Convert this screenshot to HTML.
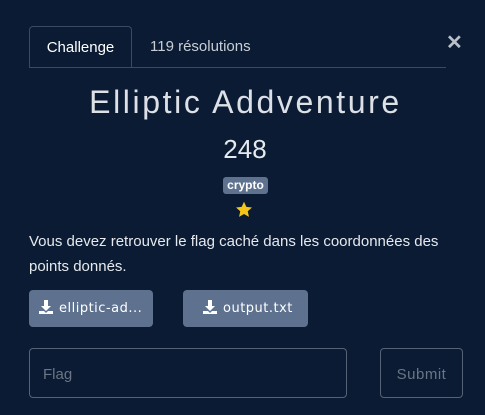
<!DOCTYPE html>
<html><head><meta charset="utf-8"><style>
body{margin:0;width:485px;height:415px;background:#0a1b33;font-family:"Liberation Sans",sans-serif;color:#e6e9ee;position:relative;overflow:hidden}
.a{position:absolute}
.tab{left:29px;top:26px;width:103px;height:41px;border:1px solid #3a4a60;border-bottom:none;border-radius:4px 4px 0 0;box-sizing:border-box;font-size:15px;text-align:center;line-height:42px;color:#fff}
.line{left:29px;top:67px;width:417px;height:1px;background:#3a4a60}
.btn{height:37px;top:290px;background:#5e7290;border-radius:4px;color:#fff;font-size:13px;line-height:37px;letter-spacing:.5px;font-family:"DejaVu Sans",sans-serif}
.btn svg{vertical-align:-3px;margin-right:5px}
</style></head><body>
<div class="a tab">Challenge</div>
<div class="a" style="left:150px;top:38px;font-size:15px;color:#c9ced6">119 résolutions</div>
<div class="a line"></div>
<div class="a" style="left:446px;top:30px;font-size:20px;font-weight:bold;color:#b8bfc9">✕</div>
<div class="a" style="left:0;width:491px;top:84px;text-align:center;font-size:32px;letter-spacing:2.6px;color:#dde1e7">Elliptic Addventure</div>
<div class="a" style="left:0;width:490px;top:134px;text-align:center;font-size:26px">248</div>
<div class="a" style="left:223px;top:177px;width:45px;height:17px;background:#5e7290;border-radius:3px;font-size:12px;font-weight:bold;text-align:center;line-height:17px;color:#fff">crypto</div>
<svg class="a" style="left:235px;top:201px" width="18" height="17" viewBox="0 0 24 23"><path d="M12 1l3.2 7 7.6.8-5.7 5.1 1.6 7.5L12 17.6 5.3 21.4l1.6-7.5L1.2 8.8l7.6-.8z" fill="#f5c518"/></svg>
<div class="a" style="left:29px;top:229px;width:440px;font-size:15px;line-height:25px;color:#e6e9ee">Vous devez retrouver le flag caché dans les coordonnées des points donnés.</div>
<div class="a btn" style="left:29px;width:124px;padding-left:9px;box-sizing:border-box"><svg width="16" height="16" viewBox="0 0 16 16"><path d="M6 1h4v6h3l-5 5-5-5h3z" fill="#fff"/><path d="M1 12h5l2 2 2-2h5v3H1z" fill="#fff"/></svg>elliptic-ad...</div>
<div class="a btn" style="left:183px;width:125px;padding-left:19px;box-sizing:border-box"><svg width="16" height="16" viewBox="0 0 16 16"><path d="M6 1h4v6h3l-5 5-5-5h3z" fill="#fff"/><path d="M1 12h5l2 2 2-2h5v3H1z" fill="#fff"/></svg>output.txt</div>
<div class="a" style="left:29px;top:348px;width:318px;height:50px;border:1px solid #566275;border-radius:4px;box-sizing:border-box;font-size:15px;line-height:52px;padding-left:13px;color:#6b7585">Flag</div>
<div class="a" style="left:380px;top:348px;width:83px;height:50px;border:1px solid #566275;border-radius:4px;box-sizing:border-box;font-size:15px;line-height:52px;text-align:center;color:#6b7585;letter-spacing:.5px">Submit</div>
</body></html>
